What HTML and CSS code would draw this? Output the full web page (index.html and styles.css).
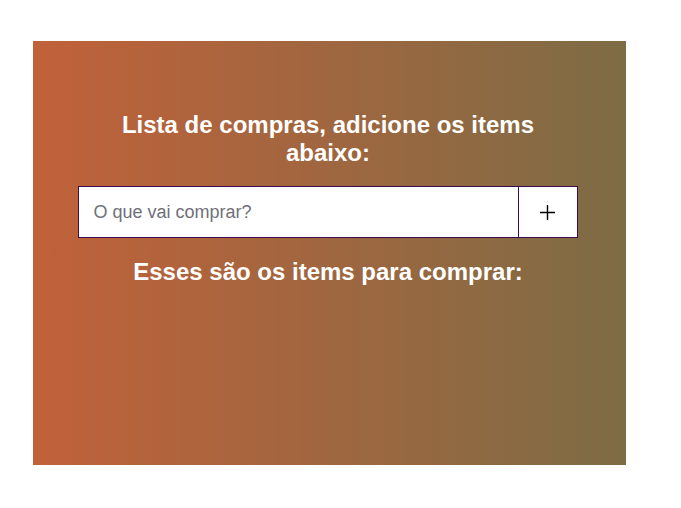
FILE: index.html
```html
<!DOCTYPE html>
<html lang="pt-BR">
<head>
<meta charset="utf-8">
<title>Lista de compras</title>
<link rel="stylesheet" href="styles.css">
</head>
<body>
<div class="page">
  <main class="card">
    <h1 class="title">Lista de compras, adicione os items abaixo:</h1>
    <form class="add-form">
      <input class="add-input" type="text" placeholder="O que vai comprar?">
      <button class="add-btn" type="button" aria-label="Adicionar">
        <svg width="17" height="17" viewBox="0 0 17 17"><path d="M8.5 1v15M1 8.5h15" stroke="#000" stroke-width="1.4" fill="none"/></svg>
      </button>
    </form>
    <h2 class="subtitle">Esses são os items para comprar:</h2>
    <ul class="items"></ul>
  </main>
</div>
</body>
</html>
```
FILE: styles.css
```css
html, body {
  margin: 0;
  padding: 0;
  background: #fff;
}
.page {
  padding: 41px 0 0 33px;
}
.card {
  box-sizing: border-box;
  width: 593px;
  height: 424px;
  padding: 70px 3px 0 0;
  background: linear-gradient(to right, #c1613a, #7d6c45);
  display: flex;
  flex-direction: column;
  align-items: center;
  font-family: "Liberation Sans", Arial, sans-serif;
  color: #fff;
}
.title {
  margin: 0;
  width: 450px;
  font-size: 24px;
  line-height: 28px;
  font-weight: bold;
  text-align: center;
}
.add-form {
  display: flex;
  width: 500px;
  height: 52px;
  margin: 19px 1px 0 0;
  box-sizing: border-box;
  border: 1px solid #3b0b4c;
  background: #fff;
}
.add-input {
  flex: 1;
  min-width: 0;
  border: none;
  outline: none;
  padding: 0 15px;
  font-family: "Liberation Sans", Arial, sans-serif;
  font-size: 18px;
  color: #333;
  background: #fff;
}
.add-input::placeholder {
  color: #6f6f78;
}
.add-btn {
  width: 59px;
  border: none;
  border-left: 1px solid #3b0b4c;
  background: #fff;
  padding: 0;
  display: flex;
  align-items: center;
  justify-content: center;
}
.subtitle {
  margin: 20px 0 0;
  font-size: 24px;
  line-height: 28px;
  font-weight: bold;
  text-align: center;
}
.items {
  margin: 0;
  padding: 0;
  list-style: none;
}
```
